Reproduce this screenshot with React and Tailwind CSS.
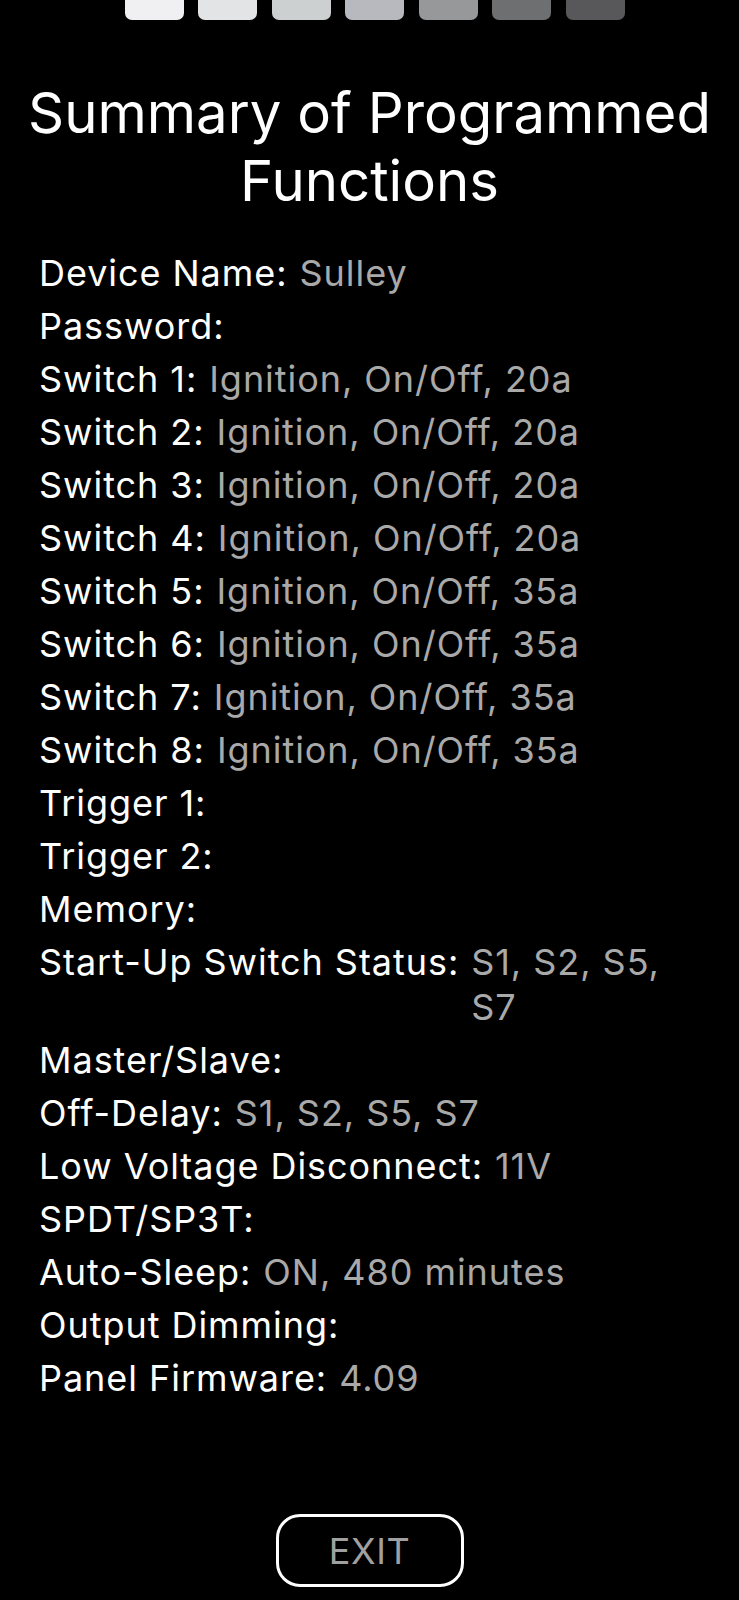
import React from 'react';

const swatches = ['#f0f0f2', '#e3e4e6', '#cdd0d1', '#b8b9be', '#97989a', '#6e6f71', '#58585a'];

const rows = [
  { label: 'Device Name:', value: 'Sulley' },
  { label: 'Password:', value: '' },
  { label: 'Switch 1:', value: 'Ignition, On/Off, 20a' },
  { label: 'Switch 2:', value: 'Ignition, On/Off, 20a' },
  { label: 'Switch 3:', value: 'Ignition, On/Off, 20a' },
  { label: 'Switch 4:', value: 'Ignition, On/Off, 20a' },
  { label: 'Switch 5:', value: 'Ignition, On/Off, 35a' },
  { label: 'Switch 6:', value: 'Ignition, On/Off, 35a' },
  { label: 'Switch 7:', value: 'Ignition, On/Off, 35a' },
  { label: 'Switch 8:', value: 'Ignition, On/Off, 35a' },
  { label: 'Trigger 1:', value: '' },
  { label: 'Trigger 2:', value: '' },
  { label: 'Memory:', value: '' },
  { label: 'Start-Up Switch Status:', value: 'S1, S2, S5, S7' },
  { label: 'Master/Slave:', value: '' },
  { label: 'Off-Delay:', value: 'S1, S2, S5, S7' },
  { label: 'Low Voltage Disconnect:', value: '11V' },
  { label: 'SPDT/SP3T:', value: '' },
  { label: 'Auto-Sleep:', value: 'ON, 480 minutes' },
  { label: 'Output Dimming:', value: '' },
  { label: 'Panel Firmware:', value: '4.09' },
];

const App = () => {
  return (
    <div
      className="min-h-[1600px] w-full bg-black text-white flex flex-col"
      style={{ fontFamily: 'Inter, "Noto Sans", sans-serif' }}
    >
      {/* colour swatches, cut off at the top */}
      <div className="flex justify-center gap-[14.5px] pl-[10px]">
        {swatches.map((c) => (
          <div key={c} className="w-[59px] h-[20px] rounded-b-[7px]" style={{ backgroundColor: c }} />
        ))}
      </div>

      <h1 className="mt-[59px] text-center text-[56.3px] leading-[68px] font-normal">
        Summary of Programmed
        <br />
        Functions
      </h1>

      <div className="mt-[36px] px-[39px] flex flex-col gap-[8px] text-[36px] leading-[45px] tracking-[0.95px]">
        {rows.map((r) => (
          <div key={r.label} className="flex">
            <span className="whitespace-nowrap shrink-0">{r.label}</span>
            {r.value && <span className="ml-[12px] text-[#a9a9a9] pr-[30px]">{r.value}</span>}
          </div>
        ))}
      </div>

      <div className="flex-1" />

      <div className="flex justify-center pb-[13px]">
        <button className="w-[188px] h-[73px] border-[3px] border-white rounded-[24px] text-[36px] tracking-[0.6px] text-[#a0a0a0]">
          EXIT
        </button>
      </div>
    </div>
  );
};

export default App;
